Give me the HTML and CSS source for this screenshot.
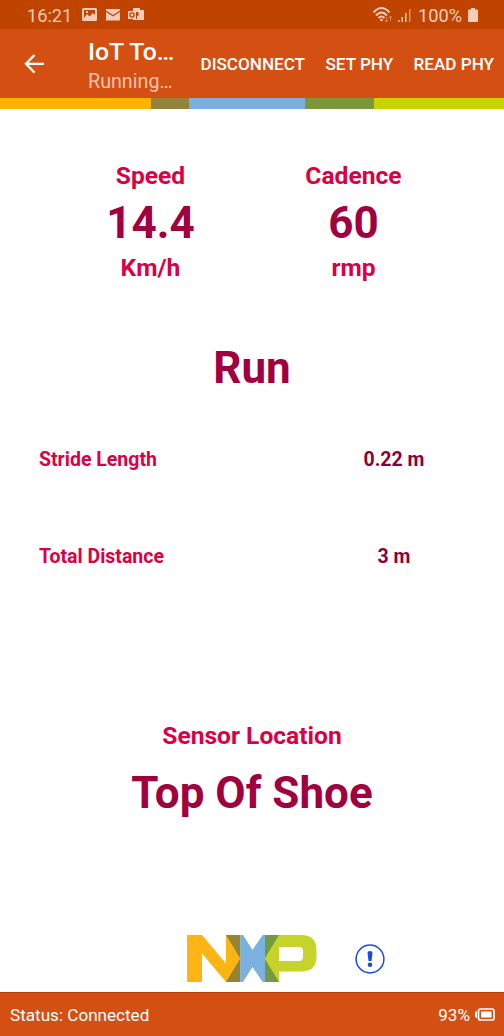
FILE: index.html
```html
<!DOCTYPE html>
<html lang="en">
<head>
<meta charset="utf-8">
<title>IoT Toolbox</title>
<link rel="stylesheet" href="styles.css">
</head>
<body>
<div class="statusbar">
  <span class="clock">16:21</span>
  <svg class="notices" width="64" height="16" viewBox="0 0 64 16">
    <path fill="#f3cdb9" fill-rule="evenodd" d="M1.500 1h12Q15 1 15 2.500v10Q15 14 13.500 14h-12Q0 14 0 12.500v-10Q0 1 1.500 1zM2 3v8l3-4 2.500 2.500L11 6l2 2V3zM4 4h2v2H4z"/>
    <path fill="#f3cdb9" d="M24 2h14v1.500L31 8 24 3.500zM24 5l7 4.500L38 5v8.500H24z"/>
    <path fill="#f3cdb9" d="M51 1h7v2h4v2l-5 3-1-3h-5zM46 4h8v8h-8zM55 9l2-1 5 3v2H51v-1h4zM57 8l5-3v6z"/>
    <circle cx="50" cy="8" r="2.100" fill="none" stroke="#c04400" stroke-width="1.300"/>
  </svg>
  <svg class="signals" width="39" height="18" viewBox="0 0 39 18">
    <g fill="none" stroke="#f3cdb9" stroke-width="1.900">
      <path d="M.5 6.500Q8.500-2.500 16.500 6.500M3 9.500Q8.500 3.500 14 9.500M5.500 12Q8.500 9 11.500 12"/>
    </g>
    <circle cx="8.500" cy="14" r="1.300" fill="#f3cdb9"/>
    <path stroke="#dc9068" stroke-width=".8" fill="none" d="M13.500 11v5m-1.500-2 1.500 2 1.500-2M17.500 15v-5m-1.500 2 1.500-2 1.500 2"/>
    <path fill="#f3cdb9" d="M25 14h1.500v2H25zM28.500 11H30v5h-1.500zM32 7h1.500v9H32z"/>
    <path fill="#dc9068" d="M36 3h1.500v13H36z"/>
  </svg>
  <span class="level">100%</span>
  <svg class="cell" width="10" height="15" viewBox="0 0 10 15"><path fill="#f3cdb9" d="M3 0h4v1.500h2q1 0 1 1V13q0 1-1 1H1q-1 0-1-1V2.500q0-1 1-1h2z"/></svg>
</div>
<header class="appbar">
  <svg class="back" width="20" height="20" viewBox="0 0 20 20"><path fill="none" stroke="#fff" stroke-width="2.300" d="M10.500 1 2 9.800 10.500 18.600M2 9.800h18"/></svg>
  <div class="titles"><div class="title">IoT To…</div><div class="subtitle">Running…</div></div>
  <nav class="actions"><span>DISCONNECT</span><span>SET PHY</span><span>READ PHY</span></nav>
</header>
<div class="stripe"><i class="amber"></i><i class="olive"></i><i class="blue"></i><i class="green"></i><i class="lime"></i></div>
<main>
  <section class="metrics">
    <div class="metric"><div class="label">Speed</div><div class="value">14.4</div><div class="label unit">Km/h</div></div>
    <div class="metric"><div class="label">Cadence</div><div class="value">60</div><div class="label unit">rmp</div></div>
  </section>
  <div class="value activity">Run</div>
  <div class="row"><span class="name">Stride Length</span><span class="amount">0.22 m</span></div>
  <div class="row"><span class="name">Total Distance</span><span class="amount">3 m</span></div>
  <section class="location"><div class="label">Sensor Location</div><div class="value">Top Of Shoe</div></section>
  <div class="brand">
    <svg class="logo" width="130" height="47" viewBox="0 0 130 47">
      <path fill="#958432" d="M39 0h14.500v47H39z"/>
      <path fill="#7bb1de" d="M53.300 0H56l9.500 15L75.700 0H79v47h-3.300L65.500 32 56 47h-2.700z"/>
      <path fill="#fdb515" d="M0 0h15l24 28.500V0l14.300 23.500L39 47 15 18.500V47H0z"/>
      <path fill="#729a42" d="M78 0h14v47H78z"/>
      <path fill="#c6d32a" fill-rule="evenodd" d="M92 0h22q15.500 0 15.500 15v6.500q0 15-15.500 15H92V47L77.700 23.500zM92 12v14h20q4 0 4-4v-6q0-4-4-4z"/>
    </svg>
    <svg class="info" width="30" height="30" viewBox="0 0 30 30"><circle cx="15" cy="15" r="13.900" fill="none" stroke="#174ddc" stroke-width="1.500"/><path fill="#174ddc" d="M12.500 9q0-2 2.500-2t2.500 2l-1 8h-3z"/><circle cx="15" cy="20.700" r="2.300" fill="#174ddc"/></svg>
  </div>
</main>
<footer class="footer"><span class="status">Status: Connected</span><span class="charge">93%</span>
  <svg width="20" height="14" viewBox="0 0 20 14"><rect x="3.500" y="1" width="15.500" height="11" rx="2" fill="none" stroke="#fff" stroke-width="1.700"/><path fill="#fff" d="M6 3.500h10.500v6H6zM0 5q0-2 2-2v7Q0 10 0 8z"/></svg>
</footer>
</body>
</html>
```
FILE: styles.css
```css
* { box-sizing: border-box; }
body { margin: 0; width: 504px; height: 1036px; display: flex; flex-direction: column; background: #fff; font-family: Roboto, sans-serif; overflow: hidden; }
svg { display: block; flex: none; }
.statusbar { height: 29px; display: flex; align-items: center; padding: 1px 26px 0 27px; background: #c04400; color: #f3cdb9; font-size: 18.2px; line-height: 27px; }
.clock { width: 55px; }
.signals { margin-left: auto; margin-right: 6px; }
.level { width: 50px; }
.appbar { height: 69px; display: flex; align-items: center; padding: 0 10px 0 24px; background: #d35012; color: #fff; }
.titles { width: 112.5px; margin-left: 44px; padding-top: 8px; white-space: nowrap; }
.title { font-size: 24.8px; line-height: 30px; font-weight: 500; margin-top: -2px; }
.subtitle { font-size: 19.7px; line-height: 29px; color: #f3c2ad; }
.actions { flex: 1; display: flex; justify-content: space-between; font-size: 17.1px; font-weight: 500; white-space: nowrap; }
.stripe { height: 11px; display: grid; grid-template-columns: 151px 38px 116px 69px 130px; }
.amber { background: #fcb400; }
.olive { background: #92823a; }
.blue { background: #7baedb; }
.green { background: #7c963c; }
.lime { background: #c8d400; }
main { flex: 1; display: flex; flex-direction: column; padding-top: 50px; }
.metrics { display: grid; grid-template-columns: 203px 203px; padding-left: 49px; text-align: center; }
.label { color: #db0045; font-size: 24.6px; line-height: 34px; font-weight: 700; text-align: center; }
.value { color: #a1003f; font-size: 44px; line-height: 58px; font-weight: 700; text-align: center; }
.metric .value { padding-top: 2px; line-height: 56px; }
.activity { margin-top: 54px; }
.row { height: 97px; display: grid; grid-template-columns: 284px 220px; align-items: center; font-size: 19.5px; font-weight: 700; }
.activity + .row { margin-top: 14px; }
.name { padding-left: 39px; color: #db0045; }
.amount { text-align: center; color: #8c0038; }
.location { margin-top: 114px; }
.location .value { margin-top: 11px; }
.brand { display: flex; align-items: center; margin: 113px 0 0 187px; gap: 38px; }
.footer { height: 44px; display: flex; align-items: center; padding: 0 9px 0 10px; background: #d35012; border-top: 1px solid #b83a06; color: #fff; font-size: 17.1px; }
.charge { margin-left: auto; margin-right: 5px; }
```
